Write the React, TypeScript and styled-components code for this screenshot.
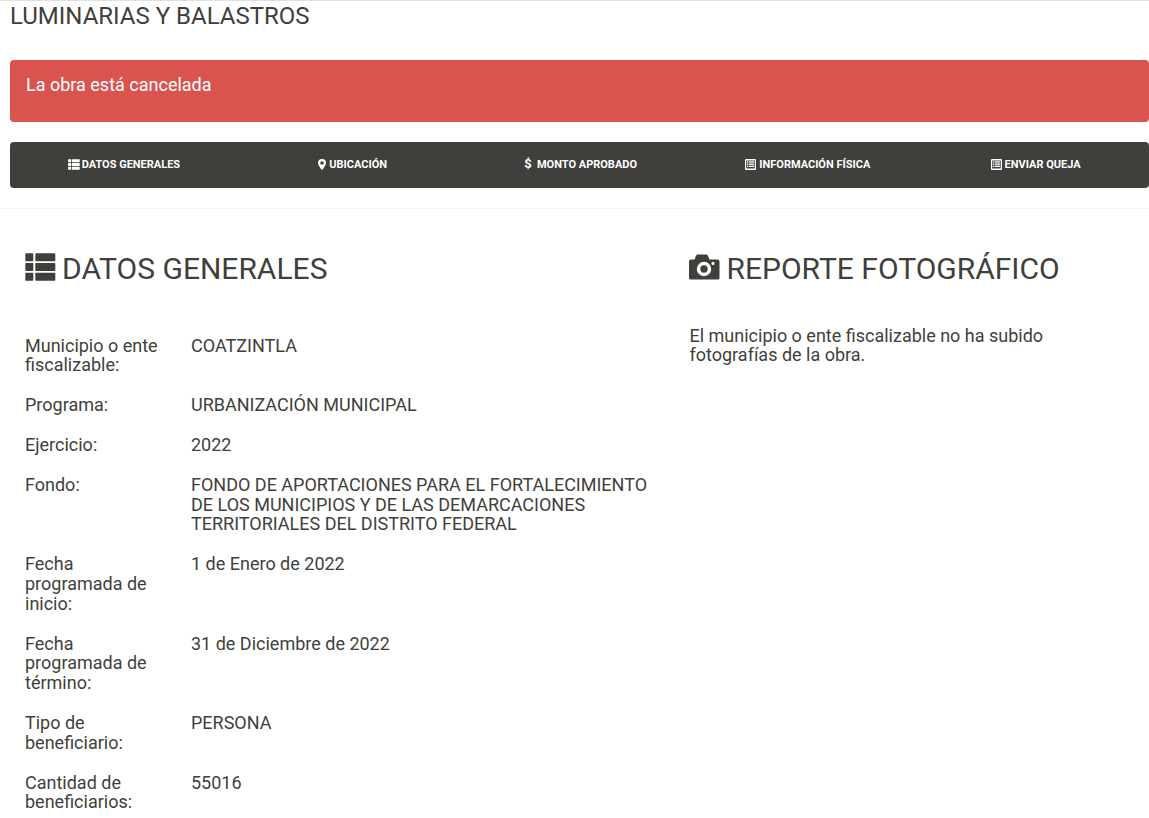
import React from "react";
import styled, { createGlobalStyle } from "styled-components";

const Global = createGlobalStyle`
  html, body { margin: 0; padding: 0; background: #fff; overflow: hidden; }
  body { font-family: Roboto, "Liberation Sans", sans-serif; color: #3f3f3b; height: 818px; }
`;

const Page = styled.div`
  border-top: 1px solid #e0e0e0;
  height: 817px;
  overflow: hidden;
`;
const Header = styled.header`
  padding: 0 0 0 10px;
`;
const Title = styled.h3`
  margin: 0 0 28px;
  font-size: 24px;
  line-height: 31px;
  font-weight: 400;
  color: #3f3f3b;
`;
const Alert = styled.div`
  height: 62px;
  box-sizing: border-box;
  padding: 15px 16px;
  background: #d9534f;
  color: #fff;
  border-radius: 4px;
  font-size: 18px;
  line-height: 20px;
  margin-bottom: 20px;
`;
const Nav = styled.nav`
  height: 46px;
  display: grid;
  grid-template-columns: repeat(5, 1fr);
  background: #3f3f3b;
  border-radius: 4px;
`;
const NavItem = styled.a<{ $gap: number; $lead: number }>`
  display: flex;
  align-items: center;
  justify-content: center;
  gap: ${(p) => p.$gap}px;
  color: #fff;
  font-size: 11px;
  font-weight: 700;
  padding: 0 0 2px ${(p) => p.$lead}px;
  box-sizing: border-box;
`;
const NavIcon = styled.svg<{ $w: number }>`
  display: block;
  flex: none;
  width: ${(p) => p.$w}px;
  height: 11px;
  margin-top: 1px;
  fill: currentColor;
`;
const Dollar = styled.span`
  font-size: 13px;
  line-height: 12px;
  font-weight: 700;
  width: 8px;
  text-align: center;
`;
const Divider = styled.hr`
  margin: 20px 0 0;
  border: 0;
  border-top: 1px solid #f3f1ee;
`;
const Columns = styled.main`
  display: grid;
  grid-template-columns: 664.5px 1fr;
  padding: 0 0 0 25px;
`;
const Heading = styled.h2`
  margin: 41px 0 0;
  font-size: 30px;
  line-height: 38px;
  font-weight: 400;
  color: #3f3f3b;
  display: flex;
  align-items: center;
  gap: 6.5px;
`;
const HeadingIcon = styled.svg<{ $h: number }>`
  display: block;
  flex: none;
  width: 31px;
  height: ${(p) => p.$h}px;
  margin: -4px 0 0 -0.5px;
  fill: currentColor;
`;
const Rows = styled.dl`
  margin: 47.6px 0 0;
  display: grid;
  grid-template-columns: 166px 460px;
  row-gap: 20px;
  font-size: 18px;
  line-height: 19.8px;
`;
const Label = styled.dt`
  margin: 0;
  width: 140px;
`;
const Value = styled.dd`
  margin: 0;
`;
const Note = styled.p`
  margin: 37.6px 0 0;
  font-size: 18px;
  line-height: 19.8px;
  width: 420px;
`;

const ThListPaths = () => (
  <>
    <rect x="0.3" y="0.3" width="8" height="8" rx="0.8" />
    <rect x="10.3" y="0.3" width="20" height="8" rx="0.8" />
    <rect x="0.3" y="10" width="8" height="8" rx="0.8" />
    <rect x="10.3" y="10" width="20" height="8" rx="0.8" />
    <rect x="0.3" y="19.7" width="8" height="8" rx="0.8" />
    <rect x="10.3" y="19.7" width="20" height="8" rx="0.8" />
  </>
);

const CameraPaths = () => (
  <path
    fillRule="evenodd"
    d="M2 5.500h3.600l1.200-3.300C7.200 1.200 8 .5 9 .5h8c1 0 1.800.7 2.200 1.700l1.200 3.300H28.500a2 2 0 0 1 2 2V24a1.500 1.500 0 0 1-1.500 1.500H1.500A1.500 1.500 0 0 1 0 24V7.500a2 2 0 0 1 2-2ZM15 7.800a7.200 7.200 0 1 0 0 14.400 7.200 7.200 0 0 0 0-14.400Zm0 3.500a3.700 3.700 0 1 1 0 7.400 3.700 3.700 0 0 1 0-7.400Zm9-3.500a1.600 1.600 0 1 0 0 3.200 1.600 1.600 0 0 0 0-3.200Z"
  />
);

const MarkerIcon = () => (
  <NavIcon $w={8} viewBox="0 0 8 11">
    <path
      fillRule="evenodd"
      d="M4 0a4 4 0 0 1 4 4c0 2-2.300 5.300-4 7C2.300 9.300 0 6 0 4a4 4 0 0 1 4-4Zm0 2.200a1.800 1.800 0 1 0 0 3.600 1.800 1.800 0 0 0 0-3.600Z"
    />
  </NavIcon>
);

const ListAltIcon = () => (
  <NavIcon $w={11} viewBox="0 0 11 11">
    <path
      fillRule="evenodd"
      d="M1 0h9a1 1 0 0 1 1 1v9a1 1 0 0 1-1 1H1a1 1 0 0 1-1-1V1a1 1 0 0 1 1-1Zm.2 1.500v8h8.600v-8H1.200Z"
    />
    <rect x="2" y="2.300" width="1.400" height="1.300" />
    <rect x="4" y="2.300" width="5.200" height="1.300" />
    <rect x="2" y="4.500" width="1.400" height="1.300" />
    <rect x="4" y="4.500" width="5.200" height="1.300" />
    <rect x="2" y="6.700" width="1.400" height="1.300" />
    <rect x="4" y="6.700" width="5.200" height="1.300" />
  </NavIcon>
);

const navItems = [
  {
    icon: (
      <NavIcon $w={12} viewBox="0 0 31 28">
        <ThListPaths />
      </NavIcon>
    ),
    text: "DATOS GENERALES",
    gap: 2,
    lead: 0,
  },
  { icon: <MarkerIcon />, text: "UBICACIÓN", gap: 3, lead: 2 },
  { icon: <Dollar>$</Dollar>, text: "MONTO APROBADO", gap: 5, lead: 2 },
  { icon: <ListAltIcon />, text: "INFORMACIÓN FÍSICA", gap: 3, lead: 1 },
  { icon: <ListAltIcon />, text: "ENVIAR QUEJA", gap: 3, lead: 1 },
];

const rows = [
  ["Municipio o ente fiscalizable:", "COATZINTLA"],
  ["Programa:", "URBANIZACIÓN MUNICIPAL"],
  ["Ejercicio:", "2022"],
  ["Fondo:", "FONDO DE APORTACIONES PARA EL FORTALECIMIENTO DE LOS MUNICIPIOS Y DE LAS DEMARCACIONES TERRITORIALES DEL DISTRITO FEDERAL"],
  ["Fecha programada de inicio:", "1 de Enero de 2022"],
  ["Fecha programada de término:", "31 de Diciembre de 2022"],
  ["Tipo de beneficiario:", "PERSONA"],
  ["Cantidad de beneficiarios:", "55016"],
];

export default function App() {
  return (
    <Page>
      <Global />
      <Header>
        <Title>LUMINARIAS Y BALASTROS</Title>
        <Alert>La obra está cancelada</Alert>
        <Nav>
          {navItems.map((n) => (
            <NavItem key={n.text} $gap={n.gap} $lead={n.lead}>{n.icon}{n.text}</NavItem>
          ))}
        </Nav>
      </Header>
      <Divider />
      <Columns>
        <section>
          <Heading>
            <HeadingIcon $h={28} viewBox="0 0 31 28"><ThListPaths /></HeadingIcon>
            DATOS GENERALES
          </Heading>
          <Rows>
            {rows.map(([k, v]) => (
              <React.Fragment key={k}>
                <Label>{k}</Label>
                <Value>{v}</Value>
              </React.Fragment>
            ))}
          </Rows>
        </section>
        <section>
          <Heading>
            <HeadingIcon $h={26} viewBox="0 0 31 26"><CameraPaths /></HeadingIcon>
            REPORTE FOTOGRÁFICO
          </Heading>
          <Note>El municipio o ente fiscalizable no ha subido fotografías de la obra.</Note>
        </section>
      </Columns>
    </Page>
  );
}
